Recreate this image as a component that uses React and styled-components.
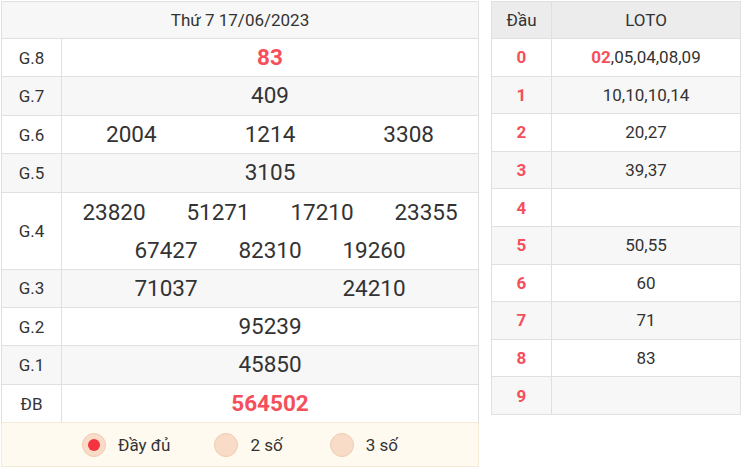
import React, { useState } from 'react';
import styled, { createGlobalStyle } from 'styled-components';

const GlobalStyle = createGlobalStyle`
    html, body {
        margin: 0;
        padding: 0;
        background: #fff;
        font-family: Roboto, "Liberation Sans", Arial, sans-serif;
        color: #333;
    }
`;

const RED = '#f64f5c';
const LINE = '#e0e0e0';

const Page = styled.div`
    display: flex;
    align-items: flex-start;
    gap: 12px;
    padding: 1px 0 0 1px;
`;

const Result = styled.div`
    width: 478px;
    box-sizing: border-box;
    border: 1px solid ${LINE};
`;

const Title = styled.div`
    height: 36px;
    display: flex;
    align-items: center;
    justify-content: center;
    background: #f7f7f7;
    font-size: 17px;
    border-bottom: 1px solid ${LINE};
`;

const PrizeRow = styled.div`
    display: flex;
    background: ${p => (p.$odd ? '#f7f7f7' : '#fff')};
    border-bottom: 1px solid ${LINE};
`;

const Label = styled.div`
    width: 59px;
    flex: none;
    border-right: 1px solid ${LINE};
    display: flex;
    align-items: center;
    justify-content: center;
    font-size: 17px;
    color: #333;
`;

const Numbers = styled.div`
    flex: 1;
    display: flex;
    flex-wrap: wrap;
    justify-content: center;
    align-content: center;
`;

const Num = styled.span`
    width: ${p => p.$w};
    text-align: center;
    font-size: 22.5px;
    line-height: ${p => (p.$tall ? '38px' : '37.4px')};
    font-weight: ${p => (p.$hot ? 700 : 400)};
    color: ${p => (p.$hot ? RED : '#333')};
`;

const Options = styled.div`
    height: 43px;
    display: flex;
    align-items: center;
    justify-content: center;
    background: #fffaf0;
    border-top: 1px solid #f5ead6;
    margin: -1px -1px -1px;
    border-left: 1px solid #f5ead6;
    border-right: 1px solid #f5ead6;
    border-bottom: 1px solid #f5ead6;
`;

const Option = styled.label`
    display: flex;
    align-items: center;
    gap: 12px;
    margin-right: ${p => p.$gap}px;
    font-size: 17px;
    color: #333;
    cursor: pointer;
`;

const Dot = styled.span`
    width: 22px;
    height: 22px;
    border-radius: 50%;
    background: #f8dcc7;
    border: 1px solid #efcbb2;
    display: flex;
    align-items: center;
    justify-content: center;

    &::after {
        content: '';
        display: ${p => (p.$on ? 'block' : 'none')};
        width: 12px;
        height: 12px;
        border-radius: 50%;
        background: #f5323f;
    }
`;

const Loto = styled.div`
    width: 250px;
    box-sizing: border-box;
    border: 1px solid ${LINE};
`;

const LotoRow = styled.div`
    display: flex;
    height: ${p => (p.$head ? '36px' : '36.6px')};
    background: ${p => (p.$head ? '#ececec' : p.$odd ? '#f7f7f7' : '#fff')};
    border-bottom: ${p => (p.$last ? 'none' : `1px solid ${LINE}`)};
    font-size: 17px;
`;

const Head = styled.div`
    width: 59px;
    flex: none;
    border-right: 1px solid ${LINE};
    display: flex;
    align-items: center;
    justify-content: center;
    font-weight: ${p => (p.$digit ? 700 : 400)};
    color: ${p => (p.$digit ? RED : '#333')};
`;

const Tail = styled.div`
    flex: 1;
    display: flex;
    align-items: center;
    justify-content: center;
    color: #333;
`;

const Hot = styled.b`
    color: ${RED};
`;

const prizes = [
    { label: 'G.8', nums: ['83'], hot: true },
    { label: 'G.7', nums: ['409'] },
    { label: 'G.6', nums: ['2004', '1214', '3308'] },
    { label: 'G.5', nums: ['3105'] },
    { label: 'G.4', nums: ['23820', '51271', '17210', '23355', '67427', '82310', '19260'], w: '25%' },
    { label: 'G.3', nums: ['71037', '24210'] },
    { label: 'G.2', nums: ['95239'] },
    { label: 'G.1', nums: ['45850'] },
    { label: 'ĐB', nums: ['564502'], hot: true },
];

const loto = [
    ['02', '05', '04', '08', '09'],
    ['10', '10', '10', '14'],
    ['20', '27'],
    ['39', '37'],
    [],
    ['50', '55'],
    ['60'],
    ['71'],
    ['83'],
    [],
];

const opts = [
    { key: 'full', text: 'Đầy đủ', gap: 44 },
    { key: '2', text: '2 số', gap: 47 },
    { key: '3', text: '3 số', gap: 0 },
];

const App = () => {
    const [mode, setMode] = useState('full');

    return (
        <Page>
            <GlobalStyle />
            <Result>
                <Title>Thứ 7 17/06/2023</Title>
                {prizes.map((p, i) => (
                    <PrizeRow key={p.label} $odd={i % 2 === 1}>
                        <Label>{p.label}</Label>
                        <Numbers>
                            {p.nums.map((n, j) => (
                                <Num key={`${p.label}-${j}`} $w={p.w || `${100 / p.nums.length}%`} $hot={p.hot} $tall={p.nums.length > 4}>{n}</Num>
                            ))}
                        </Numbers>
                    </PrizeRow>
                ))}
                <Options>
                    {opts.map(o => (
                        <Option key={o.key} $gap={o.gap} onClick={() => setMode(o.key)}>
                            <Dot $on={mode === o.key} />
                            {o.text}
                        </Option>
                    ))}
                </Options>
            </Result>
            <Loto>
                <LotoRow $head>
                    <Head>Đầu</Head>
                    <Tail>LOTO</Tail>
                </LotoRow>
                {loto.map((tails, d) => (
                    <LotoRow key={`loto-${d}`} $odd={d % 2 === 1} $last={d === 9}>
                        <Head $digit>{d}</Head>
                        <Tail>
                            {tails.map((t, k) => (
                                <React.Fragment key={`t-${d}-${k}`}>
                                    {k > 0 ? ',' : ''}
                                    {t === '02' ? <Hot>{t}</Hot> : t}
                                </React.Fragment>
                            ))}
                        </Tail>
                    </LotoRow>
                ))}
            </Loto>
        </Page>
    );
};

export default App;
